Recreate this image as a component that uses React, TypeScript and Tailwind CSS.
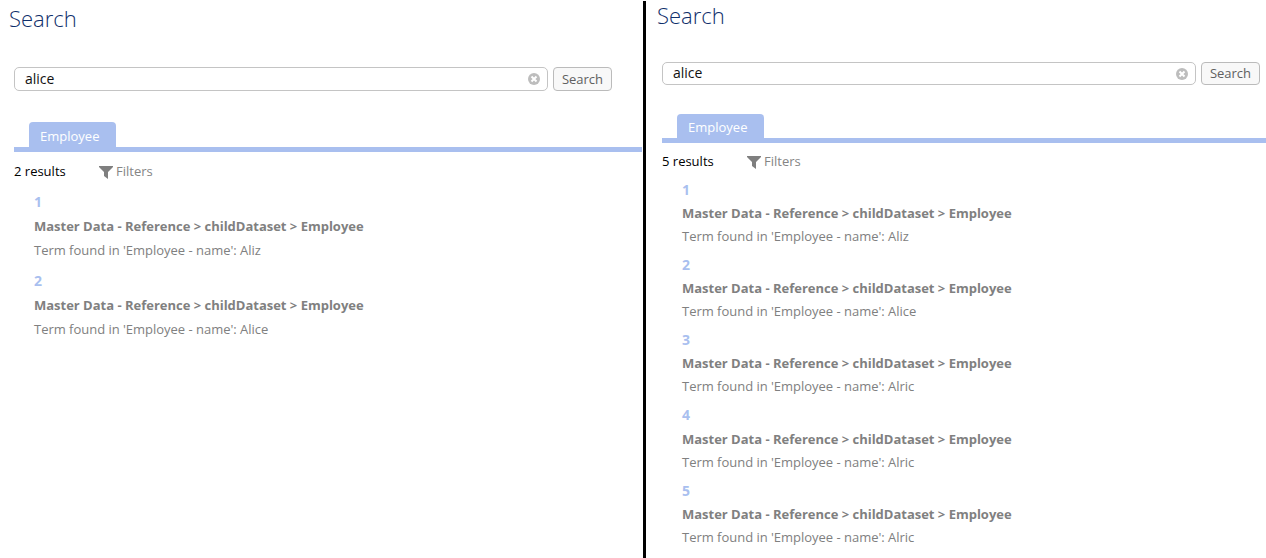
type Result = { id: number; name: string };

type PanelProps = { results: Result[]; compact?: boolean };

function ClearIcon() {
  return (
    <svg className="h-3 w-3 shrink-0" viewBox="0 0 12 12" fill="none">
      <circle cx="6" cy="6" r="6" fill="#bdbdbd" />
      <path d="M3.5 3.5l5 5M8.5 3.5l-5 5" stroke="#fff" strokeWidth="2" />
    </svg>
  );
}

function FunnelIcon() {
  return (
    <svg className="h-[13px] w-[14px] shrink-0" viewBox="0 0 14 13">
      <path d="M0 0h14v1L9 6V13L5 10V6L0 1z" fill="#7f7f7f" />
    </svg>
  );
}

function SearchPanel({ results, compact = false }: PanelProps) {
  return (
    <section className={`h-[558px] min-w-0 overflow-hidden ${compact ? "pl-[2px]" : "pr-px"}`}>
      <h1 className={`h-[34px] pl-[9px] text-[22px] leading-[30px] font-light text-[#0f2f6b] ${compact ? "" : "pt-[3px]"}`}>Search</h1>
      <div className={`flex pl-[14px] ${compact ? "mt-[28px] h-[23px]" : "mt-[33px] h-6"}`}>
        <div className="flex w-[534px] items-center justify-between rounded-[5px] border border-[#c4c4c4] pr-[7px] pl-[10px] text-[14px] text-[#111]">
          <span className={compact ? "pb-px leading-5" : "leading-5"}>alice</span>
          <ClearIcon />
        </div>
        <button className={`ml-[5px] w-[59px] rounded-[4px] border border-[#bbb] bg-[#f8f8f8] text-[13px] text-[#606060] ${compact ? "pb-px leading-5" : "leading-[22px]"}`}>Search</button>
      </div>
      <div className={`ml-[14px] flex border-b-[5px] border-b-[#a9bfef] pl-[15px] ${compact ? "mt-[29px]" : "mt-[31px]"}`}>
        <div className={`w-[87px] rounded-t-[4px] bg-[#a9bfef] pl-[11px] text-[13px] text-white ${compact ? "h-6 leading-[27px]" : "h-[25px] leading-[28px]"}`}>Employee</div>
      </div>
      <div className={`flex h-5 items-center pl-[14px] text-[13px] ${compact ? "mt-[9px]" : "mt-[10px]"}`}>
        <span className="w-[85px] text-black">{results.length} results</span>
        <span className="flex items-center gap-[3px] text-[#858585]">
          <FunnelIcon />
          Filters
        </span>
      </div>
      <ol className={`pl-[34px] text-[13px] text-[#808080] ${compact ? "mt-[5.7px] leading-[23px]" : "mt-2 leading-6"}`}>
        {results.map((result) => (
          <li key={result.id} className={compact ? "mb-[4.95px]" : "mb-[7px]"}>
            <div className={`text-[14px] font-bold text-[#a9bfef] ${compact ? "pb-[1.3px]" : ""}`}>{result.id}</div>
            <div className="font-bold tracking-[-0.01px]">Master Data - Reference &gt; childDataset &gt; Employee</div>
            <div className="tracking-[-0.02px]">Term found in 'Employee - name': {result.name}</div>
          </li>
        ))}
      </ol>
    </section>
  );
}

const exactResults: Result[] = [
  { id: 1, name: "Aliz" },
  { id: 2, name: "Alice" },
];

const fuzzyResults: Result[] = [
  ...exactResults,
  { id: 3, name: "Alric" },
  { id: 4, name: "Alric" },
  { id: 5, name: "Alric" },
];

export default function App() {
  return (
    <main className="grid h-[558px] grid-cols-[643px_3px_1fr] overflow-hidden bg-white font-['Open_Sans',sans-serif]">
      <SearchPanel results={exactResults} />
      <div className="mt-px bg-black" />
      <SearchPanel compact results={fuzzyResults} />
    </main>
  );
}
